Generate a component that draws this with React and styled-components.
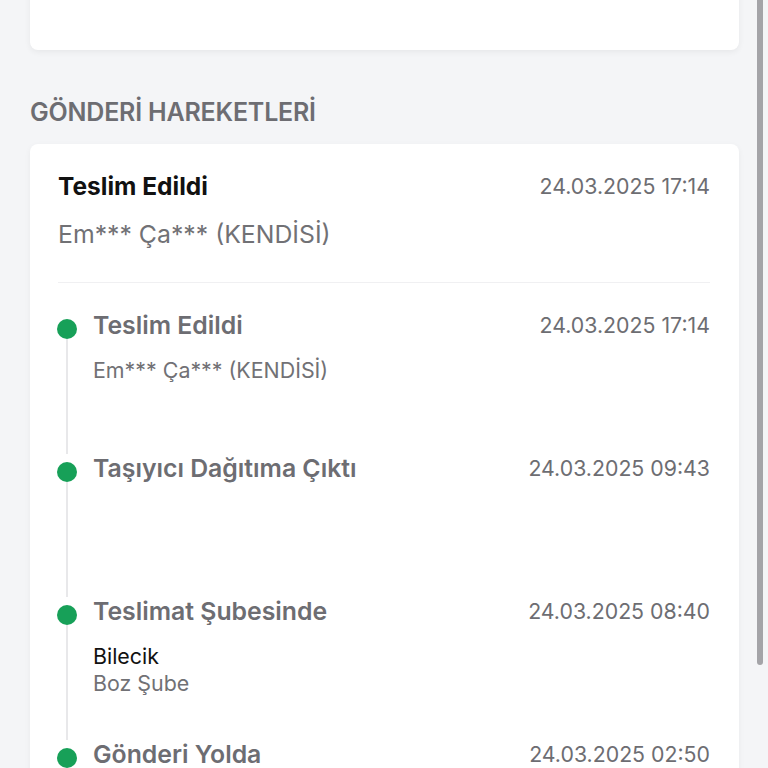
import React from "react";
import styled, { createGlobalStyle } from "styled-components";

const Global = createGlobalStyle`
  html, body { margin: 0; padding: 0; background: #f4f5f7; }
  body { font-family: Inter, "Noto Sans", sans-serif; -webkit-font-smoothing: antialiased; }
`;

const Page = styled.div`
  position: relative;
  height: 768px;
  overflow: hidden;
  background: #f4f5f7;
  padding: 0 29px 0 30px;
  box-sizing: border-box;
`;

const TopCard = styled.div`
  height: 80px;
  margin-top: -30px;
  background: #fff;
  border-radius: 8px;
  box-shadow: 0 2px 6px rgba(0, 0, 0, 0.06);
`;

const SectionTitle = styled.h2`
  margin: 48px 0 0;
  font-size: 25px;
  line-height: 28px;
  font-weight: 600;
  color: #6d6d72;
  letter-spacing: -0.2px;
`;

const Card = styled.div`
  margin-top: 18px;
  background: #fff;
  border-radius: 8px;
  box-shadow: 0 2px 6px rgba(0, 0, 0, 0.05);
  padding: 28px 29px 0 28px;
`;

const Row = styled.div`
  display: flex;
  justify-content: space-between;
  align-items: center;
`;

const MainTitle = styled.div`
  font-size: 24.5px;
  line-height: 28px;
  font-weight: 700;
  color: #111;
`;

const DateText = styled.div`
  font-size: 21.3px;
  line-height: 28px;
  color: #6d6d72;
  white-space: nowrap;
`;

const MainSub = styled.div`
  margin-top: 20px;
  font-size: 24.8px;
  line-height: 28px;
  color: #717175;
`;

const Divider = styled.div`
  margin-top: 34px;
  height: 1px;
  background: #f0f0f2;
`;

const Timeline = styled.div`
  margin-top: 28px;
  margin-left: -1px;
`;

const Item = styled.div`
  display: grid;
  grid-template-columns: 20px 1fr;
  column-gap: 16px;
  min-height: 143px;
`;

const Rail = styled.div`
  display: flex;
  flex-direction: column;
  align-items: center;
`;

const Dot = styled.div`
  margin-top: 8px;
  width: 20px;
  height: 20px;
  border-radius: 50%;
  background: #17a058;
  flex-shrink: 0;
`;

const Line = styled.div`
  flex: 1;
  width: 2px;
  background: #e8e8ea;
`;

const Content = styled.div`
  display: flex;
  flex-direction: column;
`;

const StepTitle = styled.div`
  font-size: 24.8px;
  line-height: 28px;
  font-weight: 600;
  color: #6d6d72;
`;

const StepSub = styled.div`
  margin-top: ${(p) => p.$gap || 0}px;
  font-size: 21.4px;
  line-height: 27px;
  color: ${(p) => (p.$dark ? "#111" : "#717175")};
`;

const Scrollbar = styled.div`
  position: absolute;
  top: -10px;
  right: 5px;
  width: 6px;
  height: 675px;
  border-radius: 3px;
  background: #a4a4a8;
`;

const steps = [
  { title: "Teslim Edildi", date: "24.03.2025 17:14", lines: [{ t: "Em*** Ça*** (KENDİSİ)" }] },
  { title: "Taşıyıcı Dağıtıma Çıktı", date: "24.03.2025 09:43", lines: [] },
  {
    title: "Teslimat Şubesinde",
    date: "24.03.2025 08:40",
    lines: [{ t: "Bilecik", dark: true }, { t: "Boz Şube" }],
  },
  { title: "Gönderi Yolda", date: "24.03.2025 02:50", lines: [] },
];

export default function App() {
  return (
    <>
      <Global />
      <Page>
        <TopCard />
        <SectionTitle>GÖNDERİ HAREKETLERİ</SectionTitle>
        <Card>
          <Row>
            <MainTitle>Teslim Edildi</MainTitle>
            <DateText>24.03.2025 17:14</DateText>
          </Row>
          <MainSub>Em*** Ça*** (KENDİSİ)</MainSub>
          <Divider />
          <Timeline>
            {steps.map((s, i) => (
              <Item key={i}>
                <Rail>
                  <Dot />
                  <Line />
                </Rail>
                <Content>
                  <Row>
                    <StepTitle>{s.title}</StepTitle>
                    <DateText>{s.date}</DateText>
                  </Row>
                  {s.lines.map((l, j) => (
                    <StepSub key={j} $dark={l.dark} $gap={j === 0 ? 18 : 0}>
                      {l.t}
                    </StepSub>
                  ))}
                </Content>
              </Item>
            ))}
          </Timeline>
        </Card>
        <Scrollbar />
      </Page>
    </>
  );
}
